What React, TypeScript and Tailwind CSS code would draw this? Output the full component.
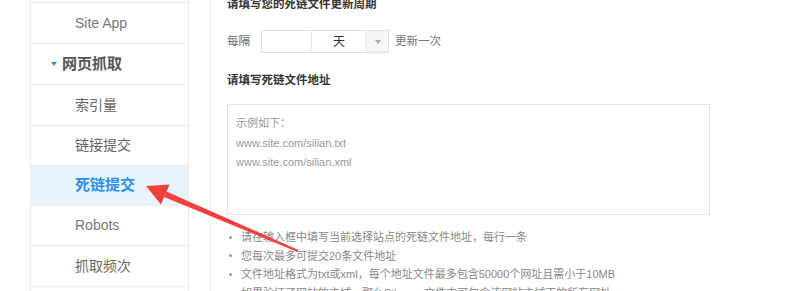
import React from "react";

const font = "font-['Liberation_Sans','Noto_Sans_CJK_SC',sans-serif]";

function Row({ h, children, active }: { h: string; children: React.ReactNode; active?: boolean }) {
  return (
    <div className={`${h} border-t border-[#ececec] flex items-center ${active ? "bg-[#e8f3fe]" : ""}`}>
      {children}
    </div>
  );
}

export default function App() {
  const bullets = [
    "请在输入框中填写当前选择站点的死链文件地址，每行一条",
    "您每次最多可提交20条文件地址",
    "文件地址格式为txt或xml，每个地址文件最多包含50000个网址且需小于10MB",
    "如果验证了网站的主域，那么Sitemap文件中可包含该网站主域下的所有网址",
  ];
  return (
    <div className={`relative w-[800px] h-[291px] overflow-hidden bg-white flex ${font}`}>
      <div className="w-[30px] shrink-0" />
      <div className="w-[159px] shrink-0 border-l border-r border-[#ececec] flex flex-col pt-[2px]">
        <Row h="h-[41px] shrink-0">
          <span className="pl-[44px] text-[14px] text-[#777]">Site App</span>
        </Row>
        <Row h="h-[41px] shrink-0">
          <span className="ml-[20px] w-0 h-0 border-l-[3.5px] border-r-[3.5px] border-t-[4px] border-l-transparent border-r-transparent border-t-[#3a8ee6]" />
          <span className="ml-[5px] text-[15px] font-bold text-[#555]">网页抓取</span>
        </Row>
        <Row h="h-[41px] shrink-0">
          <span className="pl-[44px] text-[14px] text-[#666]">索引量</span>
        </Row>
        <Row h="h-[40px] shrink-0">
          <span className="pl-[44px] text-[14px] text-[#666]">链接提交</span>
        </Row>
        <Row h="h-[40px] shrink-0" active>
          <span className="pl-[44px] text-[15px] font-bold text-[#2a8ef5]">死链提交</span>
        </Row>
        <Row h="h-[40px] shrink-0">
          <span className="pl-[44px] text-[14px] text-[#777]">Robots</span>
        </Row>
        <Row h="h-[41px] shrink-0">
          <span className="pl-[44px] text-[14px] text-[#666]">抓取频次</span>
        </Row>
        <Row h="h-[41px] shrink-0">
          <span />
        </Row>
      </div>
      <div className="w-[21px] shrink-0" />
      <div className="flex-1 border-l border-[#ececec] pl-[16px] flex flex-col">
        <div className="-mt-[4px] leading-[16px] text-[11.5px] font-bold text-[#333]">请填写您的死链文件更新周期</div>
        <div className="mt-[18px] h-[23px] flex items-center">
          <span className="text-[11.5px] text-[#666]">每隔</span>
          <div className="ml-[11px] h-[23px] flex border border-[#e0e0e0]">
            <div className="w-[49px]" />
            <div className="w-[55px] border-l border-[#e6e6e6] flex items-center justify-center text-[12px] text-[#333]">天</div>
            <div className="w-[22px] border-l border-[#e6e6e6] bg-[#f5f5f5] flex items-center justify-center">
              <span className="w-0 h-0 border-l-[3.5px] border-r-[3.5px] border-t-[4px] border-l-transparent border-r-transparent border-t-[#aaa]" />
            </div>
          </div>
          <span className="ml-[6px] text-[11.5px] text-[#777]">更新一次</span>
        </div>
        <div className="mt-[19px] leading-[16px] text-[11.5px] font-bold text-[#333]">请填写死链文件地址</div>
        <div className="mt-[16px] w-[483px] h-[111px] border border-[#e2e2e2] pl-[8px] pt-[9px] text-[11px] leading-[19.5px] text-[#999] shrink-0">
          <div>示例如下：</div>
          <div>www.site.com/silian.txt</div>
          <div>www.site.com/silian.xml</div>
        </div>
        <div className="mt-[13px] flex flex-col">
          {bullets.map((b) => (
            <div key={b} className="flex items-center h-[18.5px] whitespace-nowrap">
              <span className="ml-[2px] w-[3px] h-[3px] rounded-full bg-[#999]" />
              <span className="ml-[9px] text-[11px] text-[#888]">{b}</span>
            </div>
          ))}
        </div>
      </div>
      <svg className="absolute left-0 top-0 pointer-events-none" width="800" height="291" viewBox="0 0 800 291">
        <polygon points="164.1,197.1 166.5,191.5 298.4,250.1 297.6,251.9" fill="#f3403d" />
        <polygon points="146,186 169.6,184.4 161,204.5" fill="#f3403d" />
      </svg>
    </div>
  );
}
